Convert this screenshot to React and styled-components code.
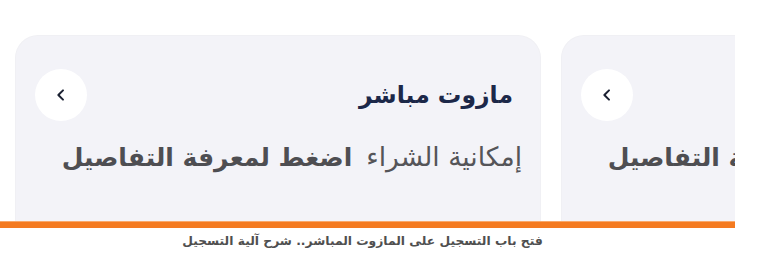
import React from "react";
import styled, { createGlobalStyle } from "styled-components";

const Global = createGlobalStyle`
  html, body { margin: 0; padding: 0; background: #ffffff; }
  body { font-family: "DejaVu Sans", "Noto Sans", sans-serif; }
`;

const Page = styled.div`
  width: 775px;
  height: 267px;
  background: #fff;
  overflow: hidden;
`;

const Viewport = styled.div`
  width: 735px;
  height: 221px;
  overflow: hidden;
`;

const Track = styled.div`
  display: flex;
  gap: 22px;
  padding: 36px 0 0 16px;
`;

const Card = styled.div`
  flex: 0 0 524px;
  height: 220px;
  background: #f3f3f8;
  border-radius: 22px;
  direction: rtl;
  box-sizing: border-box;
  padding: 33px 27px 0 19px;
  display: flex;
  flex-direction: column;
  overflow: hidden;
  box-shadow: 0 0 0 1px #f0f0f4;
`;

const Header = styled.div`
  display: flex;
  align-items: center;
  justify-content: space-between;
  height: 52px;
`;

const Title = styled.h3`
  margin: 0;
  font-size: 23.5px;
  font-weight: bold;
  color: #1c2849;
  white-space: nowrap;
`;

const CircleButton = styled.button`
  width: 52px;
  height: 52px;
  border-radius: 50%;
  border: none;
  background: #ffffff;
  display: flex;
  align-items: center;
  justify-content: center;
  padding: 0;
  color: #1c2233;
`;

const Subtitle = styled.div`
  display: flex;
  align-items: baseline;
  gap: 14px;
  margin: 20px -9px 0 0;
  white-space: nowrap;
  color: #555559;
`;

const Muted = styled.span`
  font-size: 26.5px;
  font-weight: normal;
`;

const Strong = styled.span`
  font-size: 25px;
  font-weight: bold;
  color: #4e4e52;
`;

const Bar = styled.div`
  height: 7px;
  width: 735px;
  background: #f47a20;
  border-top: 1px solid #f8a86a;
  box-sizing: border-box;
`;

const Caption = styled.p`
  margin: 6px 0 0;
  width: 725px;
  text-align: center;
  direction: rtl;
  font-size: 12.3px;
  font-weight: bold;
  color: #4f4f4f;
`;

const Chevron = () => (
  <svg width="16" height="16" viewBox="0 0 24 24" fill="none" stroke="currentColor" strokeWidth="3" strokeLinecap="round" strokeLinejoin="round">
    <path d="M15 5l-7 7 7 7" />
  </svg>
);

const CardItem = ({ title, muted, strong }) => (
  <Card>
    <Header>
      <Title>{title}</Title>
      <CircleButton aria-label="التفاصيل"><Chevron /></CircleButton>
    </Header>
    <Subtitle>
      <Muted>{muted}</Muted>
      <Strong>{strong}</Strong>
    </Subtitle>
  </Card>
);

export default function App() {
  return (
    <Page>
      <Global />
      <Viewport>
        <Track>
          <CardItem title="مازوت مباشر" muted="إمكانية الشراء" strong="اضغط لمعرفة التفاصيل" />
          <CardItem title="مازوت مباشر" muted="إمكانية الشراء" strong="اضغط لمعرفة التفاصيل" />
        </Track>
      </Viewport>
      <Bar />
      <Caption>فتح باب التسجيل على المازوت المباشر.. شرح آلية التسجيل</Caption>
    </Page>
  );
}
